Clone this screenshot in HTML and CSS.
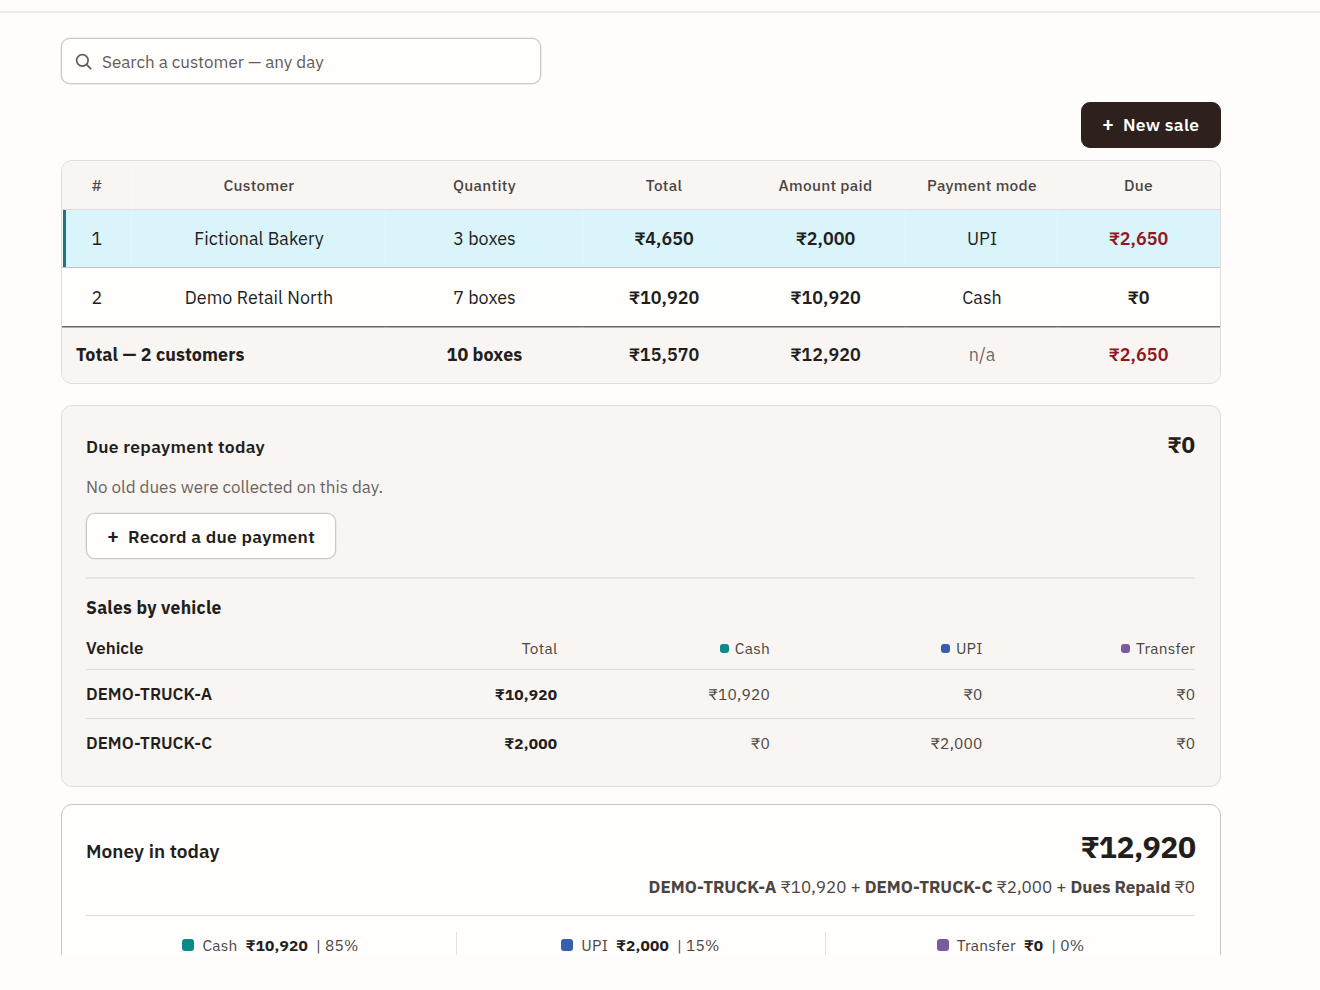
FILE: index.html
```html
<!DOCTYPE html>
<html lang="en">
<head>
<meta charset="utf-8">
<title>Daily sales</title>
<link rel="stylesheet" href="styles.css">
</head>
<body>
<main class="page">
  <div class="topline"></div>
  <div class="content">
    <label class="search">
      <svg class="search-icon" viewBox="0 0 18 18" fill="none" stroke="currentColor" stroke-width="1.8" stroke-linecap="round"><circle cx="7.8" cy="7.8" r="6.1"/><path d="M12.4 12.4 16.6 16.6"/></svg>
      <span>Search a customer — any day</span>
    </label>
    <div class="actions">
      <button class="btn btn-primary"><span class="plus">+</span><span>New sale</span></button>
    </div>

    <section class="sales">
      <div class="sales-row sales-head"><div>#</div><div>Customer</div><div>Quantity</div><div>Total</div><div>Amount paid</div><div>Payment mode</div><div>Due</div></div>
      <div class="sales-row selected"><div>1</div><div>Fictional Bakery</div><div>3 boxes</div><div class="num">₹4,650</div><div class="num">₹2,000</div><div>UPI</div><div class="num due">₹2,650</div></div>
      <div class="sales-row second"><div>2</div><div>Demo Retail North</div><div>7 boxes</div><div class="num">₹10,920</div><div class="num">₹10,920</div><div>Cash</div><div class="num">₹0</div></div>
      <div class="sales-row sales-total"><div class="label">Total — 2 customers</div><div>10 boxes</div><div class="num">₹15,570</div><div class="num">₹12,920</div><div class="na">n/a</div><div class="num due">₹2,650</div></div>
    </section>

    <section class="card dues">
      <header class="card-head"><h2>Due repayment today</h2><span class="dues-amount">₹0</span></header>
      <p class="note">No old dues were collected on this day.</p>
      <button class="btn btn-outline"><span class="plus">+</span><span>Record a due payment</span></button>
      <div class="rule"></div>
      <h3 class="subhead">Sales by vehicle</h3>
      <div class="vehicle-row vehicle-head"><div class="vehicle">Vehicle</div><div>Total</div><div><i class="dot cash"></i>Cash</div><div><i class="dot upi"></i>UPI</div><div><i class="dot transfer"></i>Transfer</div></div>
      <div class="vehicle-row"><div class="vehicle">DEMO-TRUCK-A</div><div class="strong">₹10,920</div><div>₹10,920</div><div>₹0</div><div>₹0</div></div>
      <div class="vehicle-row last"><div class="vehicle">DEMO-TRUCK-C</div><div class="strong">₹2,000</div><div>₹0</div><div>₹2,000</div><div>₹0</div></div>
    </section>

    <section class="card money">
      <header class="money-head"><h2>Money in today</h2><span class="money-amount">₹12,920</span></header>
      <p class="breakdown"><b>DEMO-TRUCK-A</b> ₹10,920 + <b>DEMO-TRUCK-C</b> ₹2,000 + <b>Dues Repaid</b> ₹0</p>
      <div class="split">
        <div><i class="swatch cash"></i><span>Cash</span><b>₹10,920</b><span class="pct">| 85%</span></div>
        <div><i class="swatch upi"></i><span>UPI</span><b>₹2,000</b><span class="pct">| 15%</span></div>
        <div><i class="swatch transfer"></i><span>Transfer</span><b>₹0</b><span class="pct">| 0%</span></div>
      </div>
    </section>
  </div>
</main>
</body>
</html>
```
FILE: styles.css
```css
* { box-sizing: border-box; }
body {
  margin: 0;
  background: #fefdfc;
  color: #231e1c;
  font: 17.9px/24px "IBM Plex Sans", "Noto Sans", sans-serif;
}
h2, h3, p { margin: 0; }
button { font: inherit; color: inherit; }
.page { height: 955px; overflow: hidden; padding-top: 11px; }
.topline { height: 2px; background: #ebe8e6; }
.content { width: 1160px; margin: 25px 0 0 61px; }

.search {
  display: flex; align-items: center; gap: 10px;
  width: 480px; height: 46px; padding-left: 13px;
  border: 1px solid #cdc9c6; border-radius: 9px;
  box-shadow: 0 0 0 .5px #dedbd8;
  background: #fffefd; color: #625c59;
  font-size: 17px;
}
.search span { padding-top: 1px; }
.search-icon { width: 17px; height: 17px; }

.actions { display: flex; justify-content: flex-end; margin-top: 18px; }
.btn {
  display: flex; align-items: center; gap: 9px;
  height: 46px; border-radius: 9px; padding: 0 0 0 20px;
  font-weight: 600; font-size: 17.49px; letter-spacing: .29px;
}
.plus { font-size: 20px; letter-spacing: 0; padding-bottom: 2px; }
.btn-primary { width: 140px; border: 1px solid #2d201d; background: #2d201d; color: #fff; }
.btn-outline { width: 250px; margin-top: 14px; padding-top: 1px; border: 1px solid #cdc8c5; background: #fffefd; box-shadow: 0 0 0 .5px #e0dcd9; }

.sales {
  height: 224px; margin-top: 12px; overflow: hidden;
  border: 1px solid #e0dcd9; border-radius: 11px;
}
.sales-row {
  display: grid; grid-template-columns: 70px 254px 197px 162px 161px 152px 1fr;
  height: 58px; text-align: center; letter-spacing: .03px;
}
.sales-row > div { display: flex; align-items: center; justify-content: center; box-shadow: inset -1px 0 rgba(255, 255, 255, .3); }
.sales-row > div:nth-last-child(4) { box-shadow: none; }
.sales-row > div:last-child { box-shadow: none; padding-right: 1px; }
.sales-head { height: 49px; border-bottom: 1px solid #e0dcd9; background: #f8f5f3; color: #4b4542; font-size: 15.49px; font-weight: 500; letter-spacing: .27px; }
.selected { background: #d9f4fb; border-bottom: 1px solid #b9c6ca; box-shadow: inset 1px 0 #eef6f8, inset 4px 0 #217382; }
.second { height: 59px; margin-bottom: -1px; background: #fffefd; }
.sales-total { position: relative; height: 57px; grid-template-columns: 324px 197px 162px 161px 152px 1fr; background: #f8f5f3; border-top: 1px solid #6f6a67; box-shadow: inset 0 1px #b0aba8; font-weight: 700; letter-spacing: .08px; }
.sales-row .label { justify-content: flex-start; padding-left: 14px; }
.sales-row .num { font-weight: 600; }
.sales-row .due { color: #911722; }
.sales-row .na { font-weight: 400; color: #716b67; }

.card { padding: 0 25px 0 24px; border: 1px solid #e0dcd9; border-radius: 11px; }
.dues { height: 382px; margin-top: 21px; background: #f8f5f3; }
.card-head { display: flex; justify-content: space-between; align-items: baseline; padding-top: 24px; }
.card h2 { font-size: 17.49px; font-weight: 600; line-height: 24px; letter-spacing: .27px; }
.dues-amount { font-size: 22.5px; font-weight: 700; line-height: 30px; }
.note { margin-top: 15px; color: #6b6561; font-size: 17px; }
.rule { height: 2px; margin-top: 18px; background: #e8e4e1; }
.subhead { margin-top: 17px; font-size: 17.49px; font-weight: 700; line-height: 24px; letter-spacing: .25px; }
.vehicle-row {
  display: grid; grid-template-columns: 1fr repeat(4, 212.67px); align-items: center;
  height: 49px; border-bottom: 1px solid #e0dcd9; text-align: right; color: #4b4542; font-size: 15.49px; letter-spacing: .23px;
}
.vehicle-row > div:not(.vehicle) { margin-right: -.3px; }
.vehicle-head { height: 50px; padding-top: 7px; }
.vehicle-row.last { border-bottom: 0; height: 48px; }
.vehicle-row .vehicle { text-align: left; font-weight: 600; font-size: 16.9px; letter-spacing: .04px; color: #231e1c; }
.vehicle-row .strong { font-weight: 700; color: #231e1c; }
.dot { display: inline-block; width: 9px; height: 9px; margin-right: 6px; border-radius: 3px; vertical-align: 1px; }
.cash { background: #088c87; }
.upi { background: #355fae; }
.transfer { background: #775ba3; }

.money { height: 200px; margin-top: 17px; border-color: #c9c5c3; background: #fffefd; }
.money-head { display: flex; justify-content: space-between; align-items: baseline; padding-top: 22px; }
.money h2 { font-size: 19px; letter-spacing: .06px; }
.money-amount { font-size: 30px; font-weight: 700; line-height: 40px; letter-spacing: -.45px; margin-right: -.45px; }
.breakdown { margin-top: 8px; text-align: right; font-size: 17px; color: #4b4542; }
.breakdown b { font-weight: 700; }
.split { display: grid; grid-template-columns: 371px 369px 1fr; margin-top: 16px; padding-top: 16px; border-top: 1px solid #e0dcd9; }
.split > div { display: flex; align-items: center; justify-content: center; height: 28px; padding: 0 1px 2px 0; border-right: 1px solid #e4e1de; font-size: 15.49px; letter-spacing: .22px; color: #4b4542; }
.split > div:last-child { border-right: 0; padding-right: 0; }
.split b { margin-left: 8px; font-weight: 700; color: #231e1c; }
.swatch { width: 12px; height: 12px; margin-right: 8px; border-radius: 3px; }
.pct { margin-left: 8px; }
```
